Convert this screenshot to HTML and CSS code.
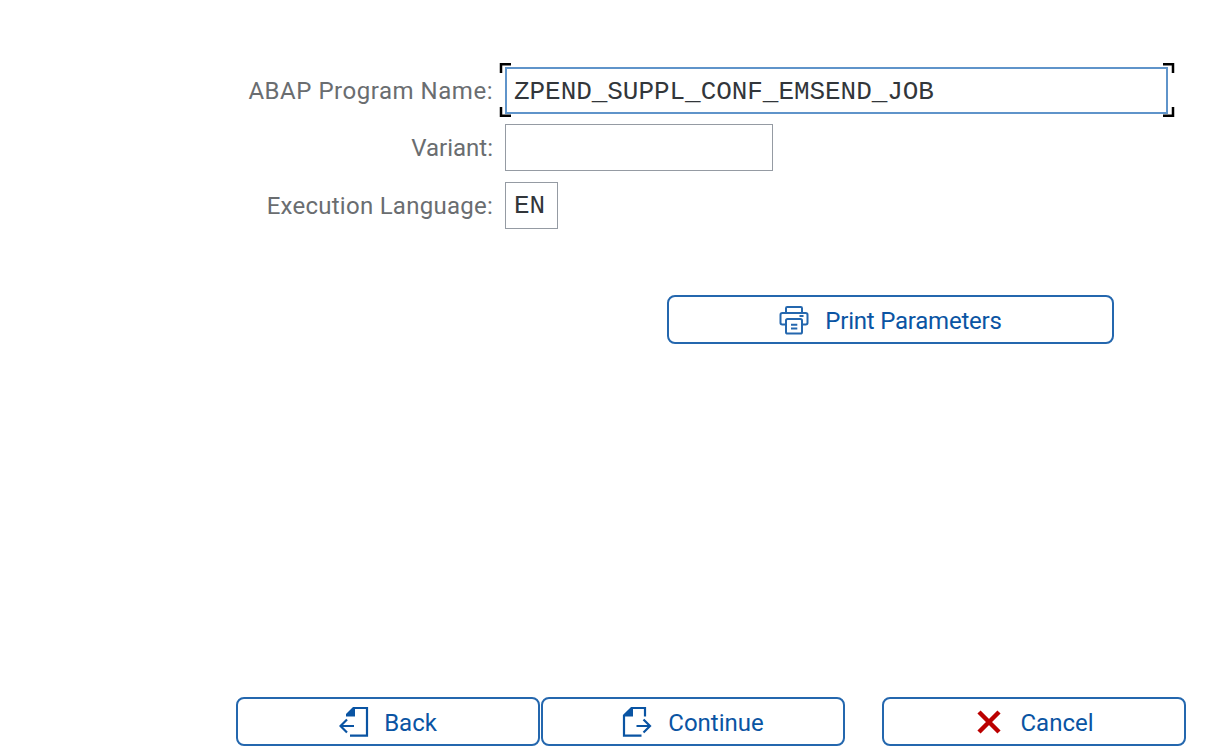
FILE: index.html
```
<!DOCTYPE html>
<html lang="en">
<head>
<meta charset="utf-8">
<title>ABAP Program</title>
<link rel="stylesheet" href="styles.css">
</head>
<body>
<main class="screen">
  <form class="fields">
    <label class="label label-program">ABAP Program Name:</label>
    <div class="field field-program">ZPEND_SUPPL_CONF_EMSEND_JOB
      <svg class="focus" width="676" height="56" viewBox="0 0 676 56"><path d="M2 11V2.300H12M664 2.300H674V11M674 45V53.700H664M12 53.700H2V45"/></svg>
    </div>
    <label class="label label-variant">Variant:</label>
    <div class="field field-variant"></div>
    <label class="label label-language">Execution Language:</label>
    <div class="field field-language">EN</div>
  </form>
  <div class="print-row">
    <button class="button button-print" type="button">
      <svg class="icon" width="30" height="30" viewBox="0 0 30 30"><path d="M7 8V3.200Q7 2 8.200 2H21.800Q23 2 23 3.200V8M7 19.500H3.200Q1.500 19.500 1.500 17.800V9.800Q1.500 8 3.300 8H26.700Q28.500 8 28.500 9.800V17.800Q28.500 19.500 26.800 19.500H23M8.600 14H21.400Q23 14 23 15.600V27Q23 28.600 21.400 28.600H8.600Q7 28.600 7 27V15.600Q7 14 8.600 14ZM12 19.800H18.300M12 23.500H18.300M20.500 11H24.500"/></svg>
      <span class="text text-print">Print Parameters</span>
    </button>
  </div>
  <div class="actions">
    <button class="button button-back" type="button">
      <svg class="icon" width="30" height="32" viewBox="0 0 30 32"><path class="bold" d="M15 2H28V29.700H11M1.500 20H15M8 13.500L1.500 20L8 26.500"/><path class="solid" d="M14 1H16V10.500H7V8Z"/></svg>
      <span class="text">Back</span>
    </button>
    <button class="button button-continue" type="button">
      <svg class="icon" width="30" height="32" viewBox="0 0 30 32"><path class="bold" d="M23 10.500V2H9.500L2 9.500V29.700H19.500M14.500 20H28M21.500 13.500L28 20L21.500 26.500"/><path class="solid" d="M9 2H11V10.500H2V9Z"/></svg>
      <span class="text">Continue</span>
    </button>
    <button class="button button-cancel" type="button">
      <svg class="icon" width="26" height="26" viewBox="0 0 26 26"><path class="cross" d="M3 3L23 23M23 3L3 23"/></svg>
      <span class="text">Cancel</span>
    </button>
  </div>
</main>
</body>
</html>
```
FILE: styles.css
```
* { box-sizing: border-box; }
body { margin: 0; background: #fff; font-family: Roboto, "Liberation Sans", sans-serif; }
.screen { width: 1217px; height: 756px; padding-top: 67px; display: flex; flex-direction: column; overflow: hidden; }
.fields { display: grid; grid-template-columns: 493px auto; column-gap: 12px; grid-template-rows: 57px 58px 47px; align-items: start; justify-items: start; }
.label { justify-self: end; padding-top: 1px; font-size: 24px; line-height: 47px; color: #6a6d70; white-space: nowrap; }
.label-program { letter-spacing: 0.530px; }
.label-language { letter-spacing: 0.260px; }
.field { position: relative; height: 47px; border: 1.500px solid #959ba3; padding-left: 8px; font-family: "Liberation Mono", monospace; font-size: 26px; line-height: 46px; letter-spacing: -0.050px; color: #32363a; white-space: nowrap; }
.field-program { width: 663px; border: 2px solid #5f94ca; padding-left: 7px; }
.field-variant { width: 268px; }
.field-language { width: 53px; }
.focus { position: absolute; left: -8px; top: -7px; fill: none; stroke: #000; stroke-width: 2.500; }
.print-row { padding: 66px 0 0 667px; }
.button { display: flex; align-items: center; justify-content: center; height: 49px; margin: 0; padding: 0; border: 2px solid #2467ae; border-radius: 8px; background: #fff; color: #0a54a3; font-family: inherit; font-size: 24px; white-space: nowrap; }
.button-print { width: 447px; gap: 16px; }
.actions { display: flex; margin-top: auto; padding: 0 0 10px 236px; }
.button-back { width: 304px; gap: 15px; }
.button-continue { width: 304px; margin-left: 1px; gap: 16px; }
.button-cancel { width: 304px; margin-left: 37px; padding-left: 2px; gap: 18px; }
.text { padding-top: 2px; }
.text-print { letter-spacing: -0.220px; }
.icon { flex: none; fill: none; stroke: #2467ae; stroke-width: 2; }
.button-back .icon, .button-continue .icon { margin-top: 1px; }
.bold { stroke: #0a54a3; stroke-width: 2.200; }
.solid { fill: #0a54a3; stroke: none; }
.cross { stroke: #bb0000; stroke-width: 4.500; }
```
